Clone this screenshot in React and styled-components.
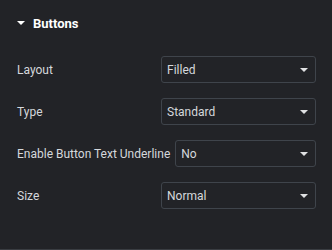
import React from "react";
import styled, { createGlobalStyle } from "styled-components";

const GlobalStyle = createGlobalStyle`
  html, body {
    margin: 0;
    padding: 0;
    background: #222327;
  }
  * { box-sizing: border-box; }
`;

const StyledPanel = styled.div`
  width: 332px;
  height: 250px;
  background: #222327;
  border-bottom: 1px solid #3a3d42;
  font-family: Roboto, "Liberation Sans", sans-serif;
  padding: 15px 16px 0 17px;
`;

const StyledHeader = styled.div`
  display: flex;
  align-items: center;
  height: 16px;
  gap: 8px;
  color: #ffffff;
  font-size: 13px;
  font-weight: 700;
  margin-bottom: 25px;
`;

const StyledCaret = styled.span`
  width: 0;
  height: 0;
  border-left: 4px solid transparent;
  border-right: 4px solid transparent;
  border-top: 4px solid ${(p) => p.color || "#ffffff"};
  flex-shrink: 0;
`;

const StyledRow = styled.div`
  display: flex;
  align-items: center;
  height: 27px;
  margin-bottom: 15px;
`;

const StyledLabel = styled.label`
  color: #d5d8dc;
  font-size: 12px;
  white-space: nowrap;
  padding-right: 5px;
  flex-shrink: 0;
`;

const StyledSelect = styled.div`
  flex: 0 1 155px;
  margin-left: auto;
  height: 27px;
  border: 1px solid #3f444b;
  border-radius: 3px;
  display: flex;
  align-items: center;
  justify-content: space-between;
  padding: 0 7px 0 5px;
  color: #d5d8dc;
  font-size: 12px;
`;

const controls = [
  { label: "Layout", value: "Filled" },
  { label: "Type", value: "Standard" },
  { label: "Enable Button Text Underline", value: "No" },
  { label: "Size", value: "Normal" },
];

const App = () => {
  return (
    <>
      <GlobalStyle />
      <StyledPanel>
        <StyledHeader>
          <StyledCaret />
          Buttons
        </StyledHeader>
        {controls.map((c, idx) => (
          <StyledRow key={idx}>
            <StyledLabel>{c.label}</StyledLabel>
            <StyledSelect>
              <span>{c.value}</span>
              <StyledCaret color="#e0e1e3" />
            </StyledSelect>
          </StyledRow>
        ))}
      </StyledPanel>
    </>
  );
};

export default App;
